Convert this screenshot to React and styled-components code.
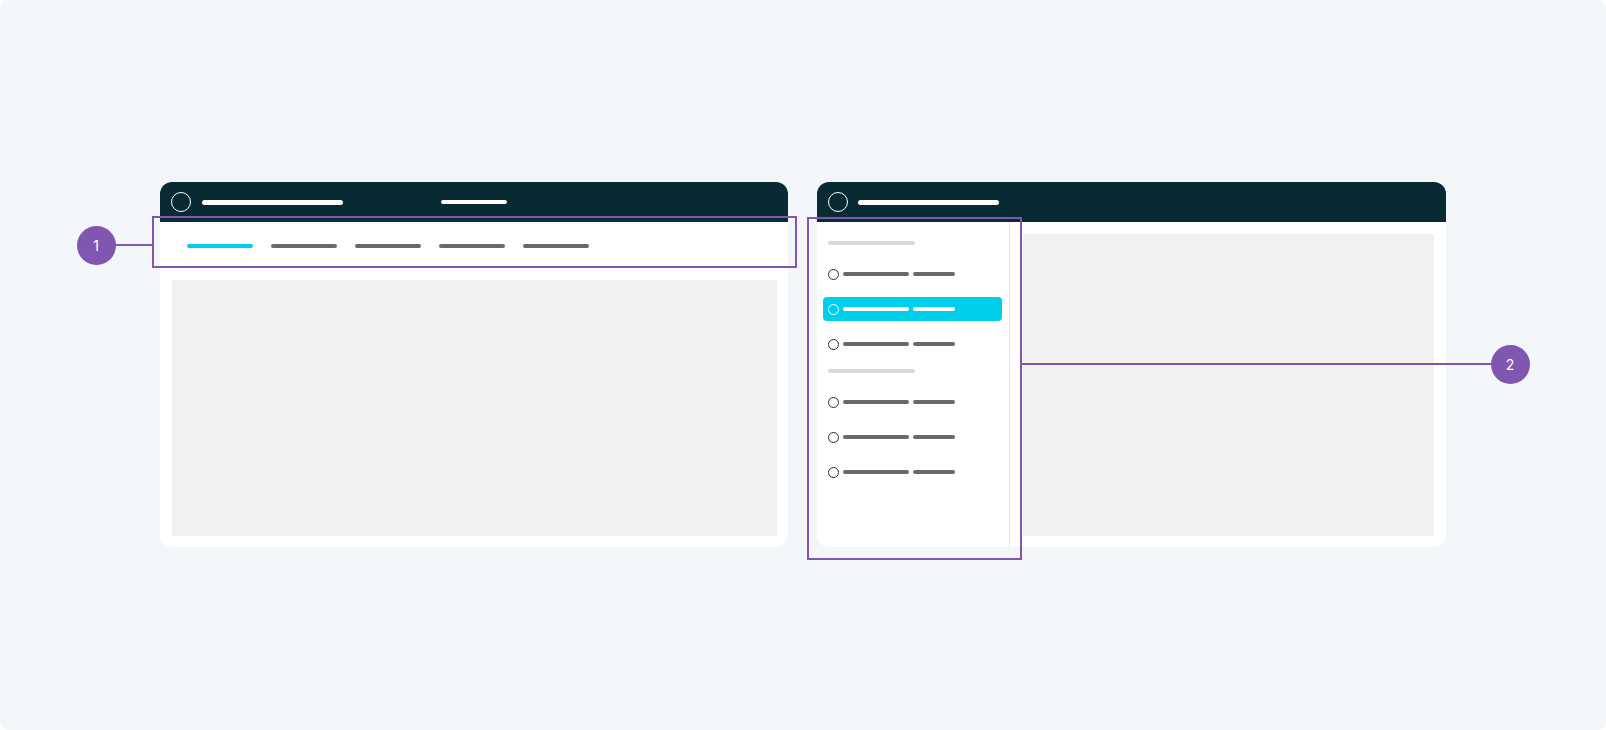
import React from "react";
import styled, { createGlobalStyle } from "styled-components";

const Global = createGlobalStyle`
  html, body { margin: 0; padding: 0; background: #ffffff; }
  body { font-family: Inter, "Liberation Sans", sans-serif; }
`;

const PURPLE = "#8156b0";
const CYAN = "#00cfec";
const DARK = "#072a33";
const BAR = "#6a6a6a";

const Canvas = styled.div`
  position: relative;
  width: 1606px;
  height: 730px;
  box-sizing: border-box;
  background: #f3f7fa;
  border-radius: 8px;
  display: flex;
  justify-content: center;
  align-items: flex-start;
  gap: 29px;
  padding-top: 182px;
`;

const Window = styled.div`
  width: ${(p) => p.$w}px;
  height: 365px;
  background: #ffffff;
  border-radius: 12px;
  overflow: hidden;
  display: flex;
  flex-direction: column;
`;

const Header = styled.div`
  height: 40px;
  flex: none;
  background: ${DARK};
  display: flex;
  align-items: center;
  padding-left: 11px;
`;

const Logo = styled.div`
  width: 20px;
  height: 20px;
  box-sizing: border-box;
  border: 1.8px solid #ffffff;
  border-radius: 50%;
  flex: none;
`;

const Line = styled.div`
  width: ${(p) => p.$w}px;
  height: ${(p) => p.$h || 4}px;
  margin-left: ${(p) => p.$ml || 0}px;
  border-radius: 3px;
  background: ${(p) => p.$c};
  flex: none;
`;

const TabRow = styled.div`
  height: 48px;
  flex: none;
  display: flex;
  align-items: center;
  gap: 18px;
  padding-left: 27px;
`;

const Content = styled.div`
  flex: 1;
  background: #f1f1f1;
  margin: ${(p) => p.$m};
`;

const Body = styled.div`
  flex: 1;
  display: flex;
  min-height: 0;
`;

const Sidebar = styled.div`
  width: 193px;
  flex: none;
  border-right: 1.5px solid #e2e2e2;
  display: flex;
  flex-direction: column;
  padding-top: 17px;
  box-sizing: border-box;
`;

const SectionLabel = styled.div`
  width: 87px;
  height: 4px;
  border-radius: 2px;
  background: #d9d9d9;
  margin: 2px 0 17px 11px;
`;

const NavItem = styled.div`
  height: 24px;
  margin: 0 7px 11px 6px;
  padding: 0 5px;
  border-radius: 4px;
  display: flex;
  align-items: center;
  gap: 4px;
  background: ${(p) => (p.$active ? CYAN : "transparent")};
`;

const Dot = styled.div`
  width: 11px;
  height: 11px;
  box-sizing: border-box;
  border-radius: 50%;
  border: 1.5px solid ${(p) => (p.$active ? "#ffffff" : "#2b2b2b")};
  background: ${(p) => (p.$active ? "transparent" : "#ffffff")};
  flex: none;
`;

const Frame = styled.div`
  position: absolute;
  left: ${(p) => p.$x}px;
  top: ${(p) => p.$y}px;
  width: ${(p) => p.$w}px;
  height: ${(p) => p.$h}px;
  box-sizing: border-box;
  border: 2px solid ${PURPLE};
  pointer-events: none;
`;

const Connector = styled.div`
  position: absolute;
  left: ${(p) => p.$x}px;
  top: ${(p) => p.$y - 1}px;
  width: ${(p) => p.$w}px;
  height: 2px;
  background: ${PURPLE};
`;

const Badge = styled.div`
  position: absolute;
  left: ${(p) => p.$cx - 19.5}px;
  top: ${(p) => p.$cy - 19.5}px;
  width: 39px;
  height: 39px;
  border-radius: 50%;
  background: ${PURPLE};
  color: #ffffff;
  font-family: Inter, "Liberation Sans", sans-serif;
  font-size: 14px;
  display: flex;
  align-items: center;
  justify-content: center;
`;

const NavRow = ({ active }) => (
  <NavItem $active={active}>
    <Dot $active={active} />
    <Line $w={66} $c={active ? "#ffffff" : BAR} />
    <Line $w={42} $c={active ? "#ffffff" : BAR} />
  </NavItem>
);

export default function App() {
  return (
    <>
      <Global />
      <Canvas>
        <Window $w={628}>
          <Header>
            <Logo />
            <Line $w={141} $h={5} $ml={11} $c="#ffffff" />
            <Line $w={66} $h={4} $ml={98} $c="#ffffff" />
          </Header>
          <TabRow>
            <Line $w={66} $c={CYAN} />
            <Line $w={66} $c={BAR} />
            <Line $w={66} $c={BAR} />
            <Line $w={66} $c={BAR} />
            <Line $w={66} $c={BAR} />
          </TabRow>
          <Content $m="10px 11px 11px 12px" />
        </Window>
        <Window $w={629}>
          <Header>
            <Logo />
            <Line $w={141} $h={5} $ml={10} $c="#ffffff" />
          </Header>
          <Body>
            <Sidebar>
              <SectionLabel />
              <NavRow />
              <NavRow active />
              <NavRow />
              <SectionLabel />
              <NavRow />
              <NavRow />
              <NavRow />
            </Sidebar>
            <Content $m="12px 12px 11px 13px" />
          </Body>
        </Window>

        <Frame $x={152} $y={216} $w={645} $h={52} />
        <Connector $x={114} $y={245} $w={39} />
        <Badge $cx={96} $cy={245}>1</Badge>

        <Frame $x={807} $y={217} $w={215} $h={343} />
        <Connector $x={1021} $y={364} $w={471} />
        <Badge $cx={1510} $cy={364}>2</Badge>
      </Canvas>
    </>
  );
}
